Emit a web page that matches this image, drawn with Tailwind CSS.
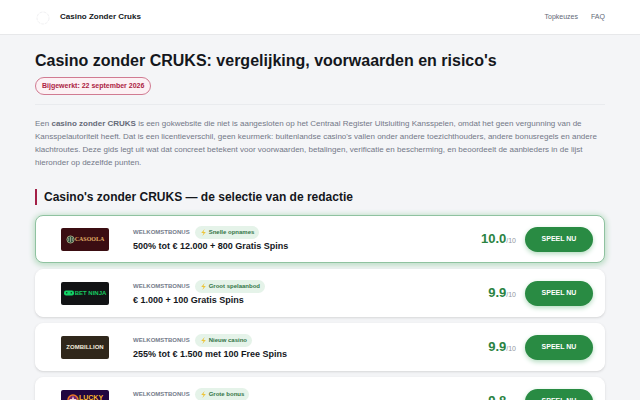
<!DOCTYPE html>
<html lang="nl">

<head>
  <meta charset="UTF-8">
  <meta name="viewport" content="width=device-width, initial-scale=1.0">
  <title>Casino Zonder Cruks</title>
  <script src="https://cdn.jsdelivr.net/npm/@tailwindcss/browser@4"></script>
</head>

<body class="bg-[#f4f5f7] font-['Liberation_Sans',Arial,sans-serif] text-[#14171c]">
  <header class="bg-white shadow-2xs">
    <div class="flex h-[34px] items-center justify-between px-[35px]">
      <a href="/" class="flex items-center gap-[9px] text-[8px] font-bold">
        <svg class="size-4" viewBox="0 0 16 16" fill="none" stroke="#f1f1f3" aria-hidden="true">
          <circle cx="8" cy="9" r="6" stroke-dasharray="3 1" />
        </svg>
        Casino Zonder Cruks
      </a>
      <nav class="flex gap-[13px] text-[7px] text-[#636977]">
        <a href="#topkeuzes">Topkeuzes</a>
        <a href="#faq">FAQ</a>
      </nav>
    </div>
  </header>

  <main class="px-[35px] pt-4">
    <h1 class="text-[16px] leading-[22px] font-bold">Casino zonder CRUKS: vergelijking, voorwaarden en risico's</h1>
    <div class="flex border-b border-[#e9ebee] pt-[5px] pb-[9px]">
      <span class="flex h-[18px] items-center rounded-full border border-[#d17b92] bg-[#fcf1f4] px-[6px] text-[7px] font-bold text-[#ac1d43]">Bijgewerkt: 22 september 2026</span>
    </div>
    <p class="mt-3 text-[8px] leading-[13px] text-[#737887]">
      Een <strong class="text-[#666b79]">casino zonder CRUKS</strong> is een gokwebsite die niet is aangesloten op het Centraal Register Uitsluiting Kansspelen, omdat het geen vergunning van de Kansspelautoriteit heeft. Dat is een licentieverschil, geen keurmerk: buitenlandse casino's vallen onder andere toezichthouders, andere bonusregels en andere klachtroutes. Deze gids legt uit wat dat concreet betekent voor voorwaarden, betalingen, verificatie en bescherming, en beoordeelt de aanbieders in de lijst hieronder op dezelfde punten.
    </p>

    <h2 id="topkeuzes" class="mt-5 border-l-2 border-[#a32047] pl-[7px] text-[12px] leading-4 font-bold">Casino's zonder CRUKS — de selectie van de redactie</h2>

    <div class="mt-[10px] flex flex-col gap-[6px]">
      <!-- Casoola -->
      <article class="flex h-12 items-center rounded-lg border border-[#8fc2a0] bg-white pr-[11px] pl-[25px] shadow-[0_1px_5px_2px_#c3e0cc]">
        <div class="flex h-[23px] w-12 items-center justify-center rounded-xs bg-[#3b0d12] font-['Liberation_Serif',serif] text-[6px] font-bold text-[#e0ad66]">
          <svg class="size-[9px]" viewBox="0 0 10 10" fill="none" aria-hidden="true">
            <circle cx="5" cy="5" r="4" fill="#24483b" stroke="#a9ab83" />
            <path d="M3 3v4M5 2v6M7 3v4" stroke="#bdc2a0" stroke-width=".8" />
          </svg>
          CASOOLA
        </div>
        <div class="ml-6 flex-1">
          <div class="flex items-center gap-[5px]">
            <span class="text-[6px] font-bold text-[#747b8a]">WELKOMSTBONUS</span>
            <span class="flex h-[13px] items-center gap-[2px] rounded-full bg-[#e5f3e9] px-[5px] text-[6px] font-bold text-[#347548]">
              <svg class="size-[7px]" viewBox="0 0 6 6" fill="#edc53c" aria-hidden="true"><path d="M4 0 1 3.500h2L2 6l3-3.500H3z" /></svg>
              Snelle opnames
            </span>
          </div>
          <p class="mt-px text-[9px] leading-3 font-bold">500% tot € 12.000 + 800 Gratis Spins</p>
        </div>
        <div class="text-[13px] font-bold text-[#2a8342]">10.0<span class="text-[7px] font-normal text-[#9297a2]">/10</span></div>
        <button type="button" class="ml-[9px] h-[25px] w-[68px] rounded-full bg-[#298b43] text-[7px] font-bold text-white shadow-[0_2px_5px_#b4dcc0]">SPEEL NU</button>
      </article>

      <!-- Bet Ninja -->
      <article class="flex h-12 items-center rounded-lg border border-white bg-white pr-[11px] pl-[25px] shadow-sm">
        <div class="flex h-[23px] w-12 items-center justify-center gap-px rounded-xs bg-[#121315] text-[6px] font-bold text-[#16c960]">
          <svg class="h-[6px] w-[10px]" viewBox="0 0 10 6" aria-hidden="true">
            <rect y=".5" width="10" height="5" rx="2" fill="#12d366" />
            <path d="m2 2 2 1-2 .5zM8 2 6 3l2 .5z" fill="#121315" />
          </svg>
          <span class="whitespace-nowrap">BET NINJA</span>
        </div>
        <div class="ml-6 flex-1">
          <div class="flex items-center gap-[5px]">
            <span class="text-[6px] font-bold text-[#747b8a]">WELKOMSTBONUS</span>
            <span class="flex h-[13px] items-center gap-[2px] rounded-full bg-[#e5f3e9] px-[5px] text-[6px] font-bold text-[#347548]">
              <svg class="size-[7px]" viewBox="0 0 6 6" fill="#edc53c" aria-hidden="true"><path d="M4 0 1 3.500h2L2 6l3-3.500H3z" /></svg>
              Groot spelaanbod
            </span>
          </div>
          <p class="mt-px text-[9px] leading-3 font-bold">€ 1.000 + 100 Gratis Spins</p>
        </div>
        <div class="text-[13px] font-bold text-[#2a8342]">9.9<span class="text-[7px] font-normal text-[#9297a2]">/10</span></div>
        <button type="button" class="ml-[9px] h-[25px] w-[68px] rounded-full bg-[#298b43] text-[7px] font-bold text-white shadow-[0_2px_5px_#b4dcc0]">SPEEL NU</button>
      </article>

      <!-- Zombillion -->
      <article class="flex h-12 items-center rounded-lg border border-white bg-white pr-[11px] pl-[25px] shadow-sm">
        <div class="flex h-[23px] w-12 items-center justify-center rounded-xs bg-[#30271b] text-[6px] font-bold text-[#f0eadb]">ZOMBILLION</div>
        <div class="ml-6 flex-1">
          <div class="flex items-center gap-[5px]">
            <span class="text-[6px] font-bold text-[#747b8a]">WELKOMSTBONUS</span>
            <span class="flex h-[13px] items-center gap-[2px] rounded-full bg-[#e5f3e9] px-[5px] text-[6px] font-bold text-[#347548]">
              <svg class="size-[7px]" viewBox="0 0 6 6" fill="#edc53c" aria-hidden="true"><path d="M4 0 1 3.500h2L2 6l3-3.500H3z" /></svg>
              Nieuw casino
            </span>
          </div>
          <p class="mt-px text-[9px] leading-3 font-bold">255% tot € 1.500 met 100 Free Spins</p>
        </div>
        <div class="text-[13px] font-bold text-[#2a8342]">9.9<span class="text-[7px] font-normal text-[#9297a2]">/10</span></div>
        <button type="button" class="ml-[9px] h-[25px] w-[68px] rounded-full bg-[#298b43] text-[7px] font-bold text-white shadow-[0_2px_5px_#b4dcc0]">SPEEL NU</button>
      </article>

      <!-- Lucky -->
      <article class="flex h-12 items-center rounded-lg border border-white bg-white pr-[11px] pl-[25px] shadow-sm">
        <div class="flex h-[23px] w-12 items-start justify-center rounded-xs bg-[#21063f] pt-1 text-[7px] leading-2 font-bold text-[#fbb62c]">
          <svg class="size-3" viewBox="0 0 12 12" fill="none" aria-hidden="true">
            <circle cx="6" cy="6" r="5" fill="#70206f" stroke="#e97824" stroke-width="1.500" />
            <path d="m6 2 1 3h3L7.500 7l1 3L6 8l-2.500 2 1-3L2 5h3z" fill="#f4d7d7" />
          </svg>
          LUCKY
        </div>
        <div class="ml-6 flex-1">
          <div class="flex items-center gap-[5px]">
            <span class="text-[6px] font-bold text-[#747b8a]">WELKOMSTBONUS</span>
            <span class="flex h-[13px] items-center gap-[2px] rounded-full bg-[#e5f3e9] px-[5px] text-[6px] font-bold text-[#347548]">
              <svg class="size-[7px]" viewBox="0 0 6 6" fill="#edc53c" aria-hidden="true"><path d="M4 0 1 3.500h2L2 6l3-3.500H3z" /></svg>
              Grote bonus
            </span>
          </div>
          <p class="mt-px text-[9px] leading-3 font-bold">&nbsp;</p>
        </div>
        <div class="text-[13px] font-bold text-[#2a8342]">9.8<span class="text-[7px] font-normal text-[#9297a2]">/10</span></div>
        <button type="button" class="ml-[9px] h-[25px] w-[68px] rounded-full bg-[#298b43] text-[7px] font-bold text-white shadow-[0_2px_5px_#b4dcc0]">SPEEL NU</button>
      </article>
    </div>
  </main>
</body>
</html>
